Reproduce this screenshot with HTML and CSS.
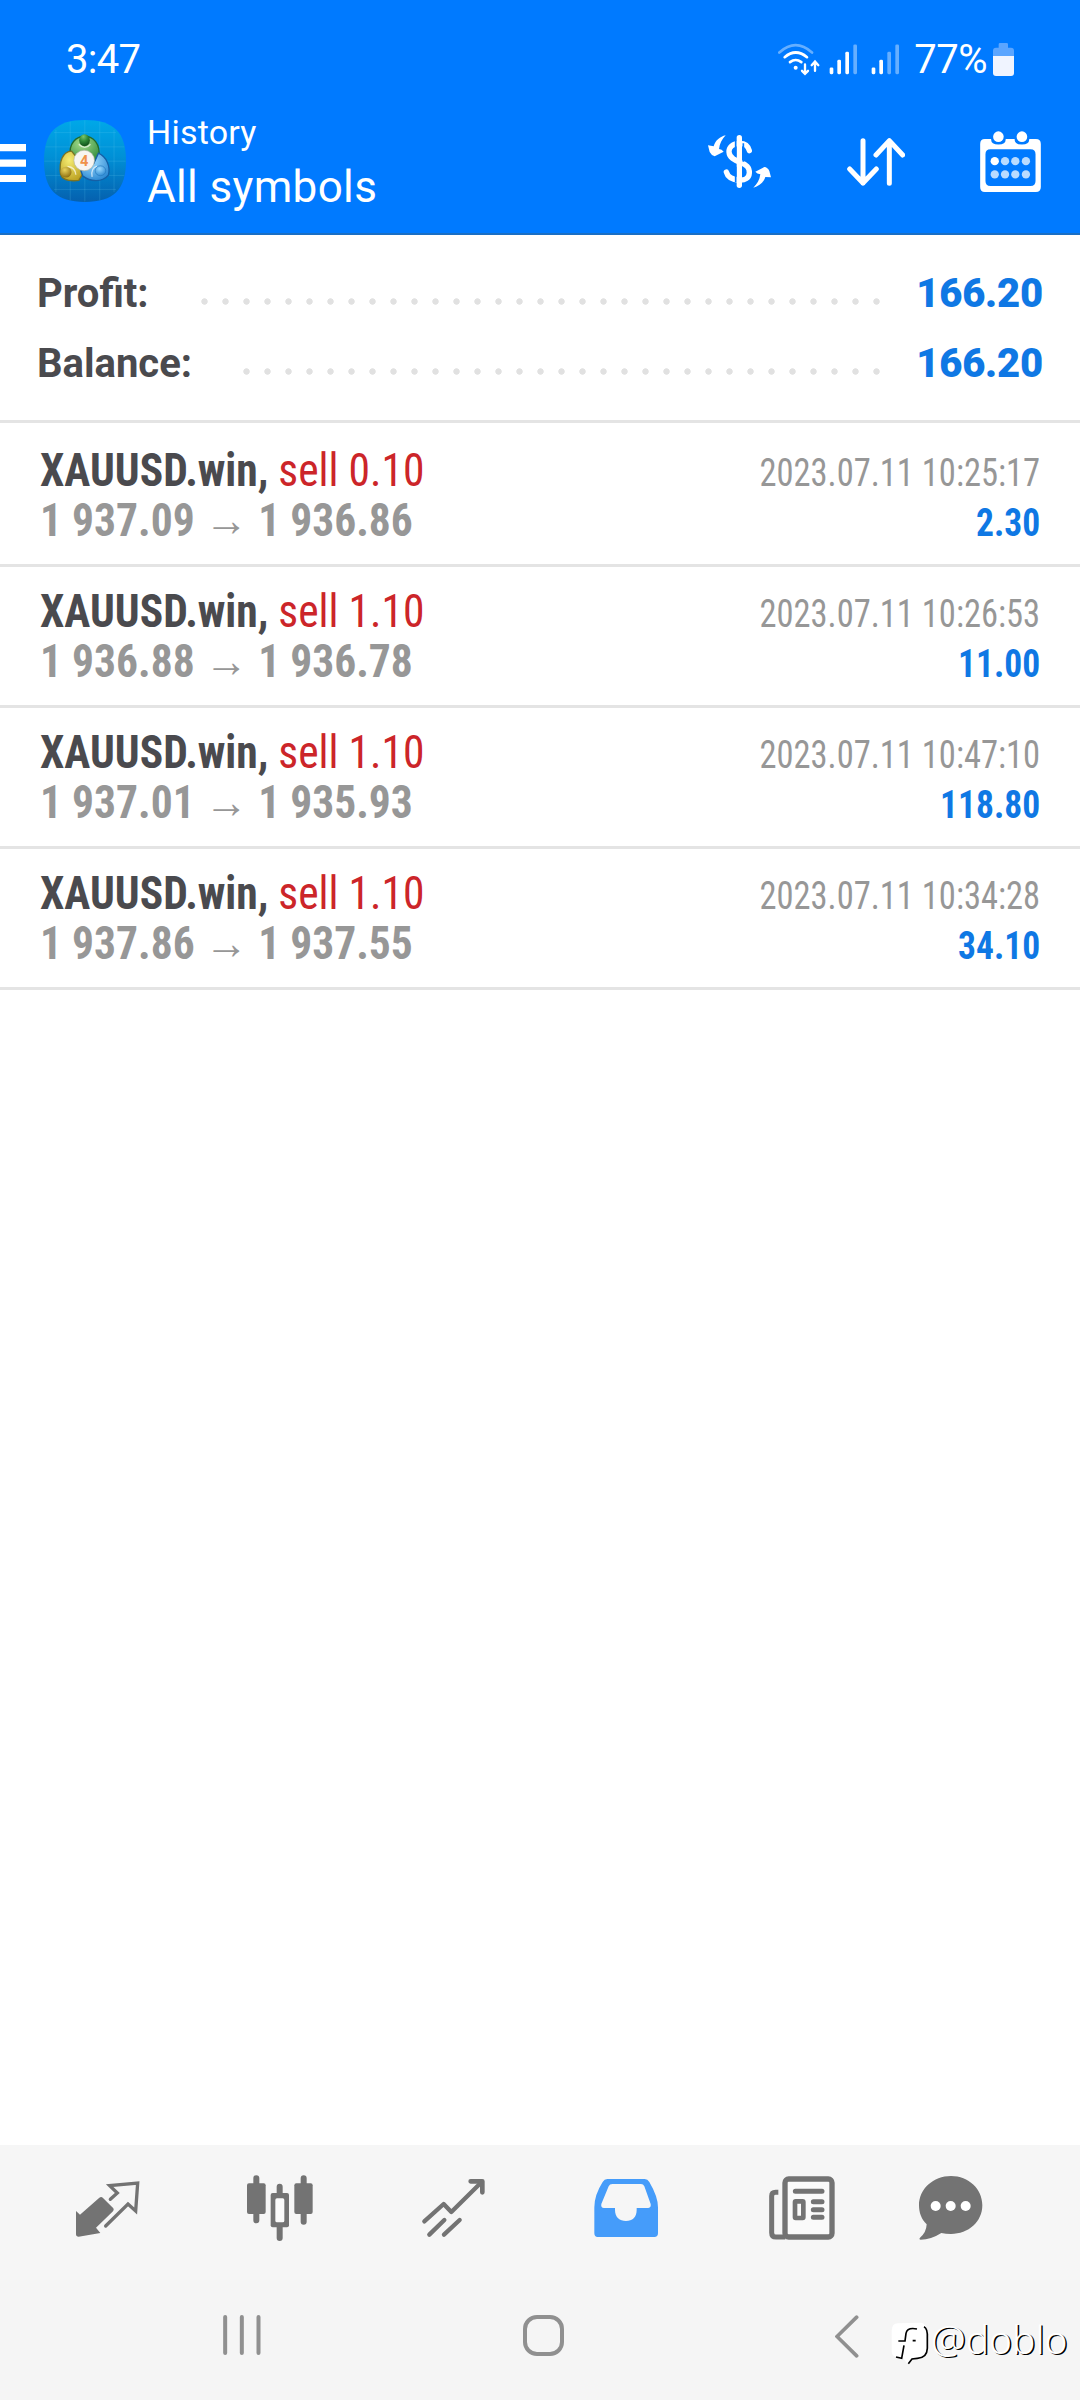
FILE: index.html
```
<!DOCTYPE html>
<html lang="en">
<head>
<meta charset="utf-8">
<title>History</title>
<link rel="stylesheet" href="styles.css">
</head>
<body>
<div class="screen">
  <header class="header">
    <div class="status">
      <span class="clock">3:47</span>
      <div class="status-right">
        <svg class="wifi" viewBox="297 70 126 98" width="42" height="33" fill="none" stroke="#fff" stroke-width="8" stroke-linecap="round">
          <path d="M301 98Q350 54 399 98" opacity=".4"/>
          <path d="M317 112Q350 84 384 112"/>
          <path d="M333 127Q350 114 367 127"/>
          <circle cx="350" cy="144" r="6" fill="#fff" stroke="none"/>
          <path d="M378 134V161M369 153L378 162L387 153M408 153V127M398 136L408 125L418 136" stroke-width="7"/>
        </svg>
        <svg class="signal" viewBox="449 73 84 92" width="28" height="31" fill="#fff">
          <rect x="451" y="143" width="11" height="20" rx="4"/><rect x="474" y="120" width="11" height="43" rx="4"/><rect x="498" y="96" width="11" height="67" rx="4"/><rect x="522" y="74" width="11" height="89" rx="4" opacity=".4"/>
        </svg>
        <svg class="signal second" viewBox="449 73 84 92" width="28" height="31" fill="#fff">
          <rect x="451" y="143" width="11" height="20" rx="4"/><rect x="474" y="120" width="11" height="43" rx="4"/><rect x="498" y="96" width="11" height="67" rx="4" opacity=".4"/><rect x="522" y="74" width="11" height="89" rx="4" opacity=".4"/>
        </svg>
        <span class="percent">77%</span>
        <svg viewBox="939 69 63 99" width="21" height="33">
          <path d="M939 108V92Q939 83 948 83H956V73Q956 69 960 69H980Q984 69 984 73V83H993Q1002 83 1002 92V108Z" fill="#5ba5ff"/>
          <path d="M939 108H1002V159Q1002 168 993 168H948Q939 168 939 159Z" fill="#f0f4ff"/>
        </svg>
      </div>
    </div>
    <div class="appbar">
      <svg class="menu" viewBox="0 0 26 38" width="26" height="38" fill="#fff"><path d="M0 0H26V7.3H0ZM0 15.5H26V22.8H0ZM0 31H26V38H0Z"/></svg>
      <svg class="logo" viewBox="40 45 247 247" width="82" height="82">
        <defs>
          <linearGradient id="sky" x1="0" y1="0" x2="0" y2="1"><stop offset="0" stop-color="#00a8e8"/><stop offset=".45" stop-color="#0090d6"/><stop offset="1" stop-color="#0560ae"/></linearGradient>
          <radialGradient id="green" cx=".4" cy=".3" r=".8"><stop offset="0" stop-color="#a5dc8a"/><stop offset="1" stop-color="#2c8a3c"/></radialGradient>
          <radialGradient id="knob" cx=".4" cy=".2" r=".8"><stop offset="0" stop-color="#7cc46a"/><stop offset=".5" stop-color="#2f8a38"/><stop offset="1" stop-color="#0f4f1a"/></radialGradient>
          <radialGradient id="gold" cx=".4" cy=".3" r=".8"><stop offset="0" stop-color="#f5ec72"/><stop offset="1" stop-color="#b89c1c"/></radialGradient>
          <radialGradient id="goldknob" cx=".4" cy=".3" r=".8"><stop offset="0" stop-color="#ead45d"/><stop offset="1" stop-color="#856408"/></radialGradient>
          <radialGradient id="azure" cx=".4" cy=".3" r=".8"><stop offset="0" stop-color="#9cdbff"/><stop offset="1" stop-color="#2382cf"/></radialGradient>
        </defs>
        <path d="M163 45C250 45 287 82 287 168C287 255 250 292 163 292C77 292 40 255 40 168C40 82 77 45 163 45Z" fill="url(#sky)"/>
        <path d="M76 75V262M119 50V287M163 46V291M208 50V287M251 75V262M70 83H257M45 126H282M41 169H286M45 212H282M70 254H257" stroke="#6fd0f5" stroke-opacity=".28" stroke-width="2"/>
        <path d="M120 155C112 116 138 94 162 94C188 94 211 116 205 157L190 168H134Z" fill="url(#green)" stroke="#226b2c" stroke-width="4"/>
        <path d="M123 139C97 140 84 170 90 209Q98 232 145 227L158 205L140 160Z" fill="url(#gold)" stroke="#7d7322" stroke-width="4"/>
        <path d="M204 145C228 156 241 184 234 211C214 235 178 230 157 214L151 198L190 176Z" fill="url(#azure)" stroke="#155fa5" stroke-width="4"/>
        <path d="M145 118Q163 137 180 118M111 185Q134 187 136 210M200 184Q180 190 185 216" fill="none" stroke="#fff" stroke-opacity=".65" stroke-width="4"/>
        <ellipse cx="162" cy="106" rx="16" ry="18" fill="url(#knob)"/>
        <ellipse cx="106" cy="202" rx="17" ry="16" fill="url(#goldknob)"/>
        <ellipse cx="210" cy="198" rx="16" ry="15" fill="url(#azure)" stroke="#2679bd" stroke-width="2"/>
        <circle cx="161" cy="167" r="31" fill="#f7f5f2" stroke="#b4b7a5" stroke-width="2"/>
        <text x="161" y="183" text-anchor="middle" class="logo-digit">4</text>
      </svg>
      <div class="titles"><div class="subtitle">History</div><div class="title">All symbols</div></div>
      <svg class="act-money" viewBox="84 345 189 159" width="63" height="53">
        <path d="M178 353V496" stroke="#fff" stroke-width="16" stroke-linecap="round" fill="none"/>
        <path d="M208 392C204 376 192 370 179 370C158 370 146 382 147 396C148 413 163 420 180 427C199 434 209 441 208 459C207 475 194 481 179 480C159 479 143 472 139 456" stroke="#fff" stroke-width="16" stroke-linecap="round" fill="none"/>
        <path d="M167 362V410M190 370V425M167 440V486" stroke="#007aff" stroke-width="5" fill="none"/>
        <path d="M137 346C120 350 107 360 101 379L84 376L89 396Q94 406 104 409L131 395Q126 388 117 387C119 370 126 358 137 346Z" fill="#fff"/>
        <path d="M220 503C237 498 250 489 256 471L273 472L268 453Q263 442 253 441L226 455Q231 462 241 463C239 480 231 492 220 503Z" fill="#fff"/>
      </svg>
      <svg class="act-sort" viewBox="499 352 174 144" width="58" height="48" fill="none" stroke="#fff" stroke-width="15" stroke-linecap="round" stroke-linejoin="round"><path d="M547 360V487M507 445L547 487L587 445M626 488V360M586 403L626 360L666 403"/></svg>
      <svg class="act-cal" viewBox="900 329 183 184" width="61" height="61">
        <path fill="#fff" fill-rule="evenodd" d="M914 353H1068Q1083 353 1083 368V498Q1083 513 1068 513H914Q900 513 900 498V368Q900 353 914 353ZM931 384Q916 384 916 399V480Q916 495 931 495H1052Q1067 495 1067 480V399Q1067 384 1052 384Z"/>
        <path d="M933 352V355Q933 370 955 370Q977 370 977 355V352ZM1004 352V355Q1004 370 1026 370Q1048 370 1048 355V352Z" fill="#007aff"/>
        <circle cx="955" cy="346" r="16" fill="#fff"/><circle cx="1026" cy="346" r="16" fill="#fff"/>
        <g fill="#b9dbff"><circle cx="944" cy="420" r="12.5" fill="#fff"/><circle cx="975" cy="420" r="12.5"/><circle cx="1006" cy="420" r="12.5"/><circle cx="1038" cy="420" r="12.5"/><circle cx="944" cy="460" r="12.5"/><circle cx="975" cy="460" r="12.5"/><circle cx="1006" cy="460" r="12.5"/><circle cx="1038" cy="460" r="12.5"/></g>
      </svg>
    </div>
  </header>

  <section class="summary">
    <div class="sum-row"><span>Profit:</span><i class="dots"></i><b class="sum-value">166.20</b></div>
    <div class="sum-row"><span>Balance:</span><i class="dots short"></i><b class="sum-value">166.20</b></div>
  </section>

  <main class="deals">
    <article class="deal"><div class="symbol"><b>XAUUSD.win,</b> <span class="sell">sell 0.10</span></div><time class="time">2023.07.11 10:25:17</time><div class="prices">1 937.09 <span class="arrow">→</span> 1 936.86</div><div class="profit">2.30</div></article>
    <article class="deal"><div class="symbol"><b>XAUUSD.win,</b> <span class="sell">sell 1.10</span></div><time class="time">2023.07.11 10:26:53</time><div class="prices">1 936.88 <span class="arrow">→</span> 1 936.78</div><div class="profit">11.00</div></article>
    <article class="deal"><div class="symbol"><b>XAUUSD.win,</b> <span class="sell">sell 1.10</span></div><time class="time">2023.07.11 10:47:10</time><div class="prices">1 937.01 <span class="arrow">→</span> 1 935.93</div><div class="profit">118.80</div></article>
    <article class="deal"><div class="symbol"><b>XAUUSD.win,</b> <span class="sell">sell 1.10</span></div><time class="time">2023.07.11 10:34:28</time><div class="prices">1 937.86 <span class="arrow">→</span> 1 937.55</div><div class="profit">34.10</div></article>
  </main>

  <nav class="tabs">
    <svg viewBox="105 106 195 198" width="65" height="66">
      <path d="M108 214L120 225L178 174Q184 170 189 175L220 206Q223 210 219 215L168 264L181 280L116 291Q108 291 108 284Z" fill="#737373"/>
      <path d="M211 179L232 160L209 138L293 130L287 214L264 193L197 259" fill="none" stroke="#737373" stroke-width="10" stroke-linejoin="miter" stroke-linecap="round"/>
    </svg>
    <svg viewBox="622 107 198 198" width="66" height="66">
      <path d="M650 117V243M720 142V296M792 117V247" stroke="#737373" stroke-width="18" stroke-linecap="round"/>
      <rect x="622" y="132" width="56" height="92" rx="6" fill="#737373"/><rect x="764" y="132" width="55" height="92" rx="6" fill="#737373"/><rect x="693" y="161" width="55" height="103" rx="6" fill="#737373"/><rect x="707" y="177" width="27" height="72" rx="5" fill="#fafafa"/>
    </svg>
    <svg viewBox="1142 105 195 198" width="65" height="66" fill="none" stroke="#737373" stroke-width="13" stroke-linecap="round" stroke-linejoin="round">
      <path d="M1152 244L1210 192L1233 216L1324 126"/><path d="M1291 124H1326V157" stroke-width="14"/><path d="M1167 284L1212 240M1211 284L1258 240"/>
    </svg>
    <svg viewBox="105 105 198 198" width="66" height="66">
      <path fill="#459cfa" fill-rule="evenodd" d="M145 117H257Q266 117 271 126Q297 170 297 202V280Q297 291 286 291H116Q106 291 106 280V202Q106 165 131 126Q136 117 145 117ZM160 132Q152 132 149 139L127 192Q125 204 135 204H168V210C168 232 182 243 201 243C220 243 233 232 233 210V204H268Q277 203 275 192L256 139Q253 132 246 132Z"/>
    </svg>
    <svg viewBox="626 105 198 198" width="66" height="66">
      <path d="M654 157H646Q634 157 634 168V278Q634 291 647 291H675" fill="none" stroke="#737373" stroke-width="15"/>
      <rect x="674" y="117" width="141" height="174" rx="11" fill="#fafafa" stroke="#737373" stroke-width="16"/>
      <path d="M705 154H785M759 185H785M759 209H785M759 232H785" stroke="#737373" stroke-width="15" stroke-linecap="round"/>
      <rect x="704" y="184" width="25" height="50" rx="2" fill="none" stroke="#737373" stroke-width="14"/>
    </svg>
    <svg viewBox="1075 105 198 198" width="66" height="66">
      <path d="M1174 108C1227 108 1268 147 1268 196C1268 245 1227 282 1174 282Q1158 282 1145 279Q1114 299 1083 299Q1077 298 1081 293Q1100 278 1101 253C1085 238 1078 218 1078 196C1078 147 1121 108 1174 108Z" fill="#737373"/>
      <circle cx="1128" cy="198" r="15" fill="#fff"/><circle cx="1173" cy="198" r="15" fill="#fff"/><circle cx="1218" cy="198" r="15" fill="#fff"/>
    </svg>
  </nav>

  <div class="sysnav">
    <svg class="recents" viewBox="130 138 113 120" width="38" height="40" stroke="#909090" stroke-width="12" stroke-linecap="round"><path d="M136 144V252M186 144V252M236 144V252"/></svg>
    <svg class="home" viewBox="0 0 41 41" width="41" height="41" fill="none" stroke="#909090" stroke-width="4"><rect x="2" y="2" width="37" height="37" rx="12"/></svg>
    <svg class="back" viewBox="106 134 72 128" width="24" height="43" fill="none" stroke="#909090" stroke-width="11" stroke-linecap="round"><path d="M171 140L112 198L171 256"/></svg>
  </div>

  <div class="watermark">
    <svg viewBox="270 153 117 135" width="39" height="45">
      <path d="M296 160Q276 158 275 182V245Q276 262 296 262L309 263L322 282L331 268H352Q380 266 381 238V184Q380 162 364 158Z" fill="#fff"/>
      <path d="M372 170Q384 176 382 206V235Q381 264 352 265L336 267L325 281" fill="none" stroke="#000" stroke-width="5"/>
      <path d="M351 177Q322 171 318 190L315 213H295M312 226L305 265L288 261M338 212H347" fill="none" stroke="#000" stroke-width="5"/>
    </svg>
    <span>@doblo</span>
  </div>
</div>
</body>
</html>
```
FILE: styles.css
```
* { box-sizing: border-box; }
body { margin: 0; background: #fff; font-family: Roboto, sans-serif; }
svg { display: block; flex: none; }
.screen { position: relative; width: 1080px; height: 2400px; display: flex; flex-direction: column; overflow: hidden; }

.header { height: 235px; background: #007aff; border-bottom: 2px solid #1a6fc4; color: #fff; }
.status { height: 90px; padding: 28px 66px 0 66px; display: flex; justify-content: space-between; align-items: center; font-size: 40px; line-height: 62px; }
.clock { padding-top: 2px; letter-spacing: -0.7px; }
.status-right { display: flex; align-items: center; }
.signal { margin-left: 9px; }
.second { margin-left: 14px; }
.percent { padding-top: 2px; margin: 0 6px 0 15px; letter-spacing: -0.5px; }
.appbar { height: 143px; display: flex; align-items: center; }
.menu { margin-top: 3px; }
.logo { margin: -1px 0 0 18px; }
.logo-digit { font: 700 44px Roboto, sans-serif; fill: #f0924a; }
.titles { margin-left: 21px; width: 561px; }
.subtitle { font-size: 34px; line-height: 50px; padding-bottom: 2px; letter-spacing: 0.2px; }
.title { font-size: 44px; line-height: 57px; letter-spacing: 0.35px; }
.act-sort { margin-left: 76px; }
.act-cal { margin-left: 75px; }

.summary { height: 188px; padding: 24px 37px 0; border-bottom: 3px solid #e4e4e4; }
.sum-row { display: flex; height: 70px; font-size: 40px; line-height: 70px; font-weight: 700; color: #4a4a4e; }
.dots { width: 693px; height: 7px; margin: 39px 0 0 auto; background: radial-gradient(circle, #e1e1e1 2.8px, transparent 3.6px) 0 0 / 21px 7px; }
.short { width: 651px; }
.sum-value { width: 156px; text-align: right; color: #0f78e4; letter-spacing: -0.2px; }

.deal { display: grid; grid-template-columns: 1fr auto; grid-template-rows: 50px 50px; align-items: baseline; height: 141px; padding: 19px 40px 0; border-bottom: 3px solid #e4e4e4; font-family: "Roboto Condensed", Roboto, sans-serif; line-height: 50px; font-size: 46px; white-space: nowrap; }
.deal:first-child { height: 144px; padding-top: 22px; }
.symbol { color: #4a4a4e; transform: scaleX(0.946); transform-origin: left; }
.sell { color: #cc2529; }
.time { font-size: 38px; color: #979797; transform: scaleX(0.908); transform-origin: right; }
.prices { font-weight: 700; color: #979797; transform: scaleX(0.946); transform-origin: left; }
.profit { font-size: 38px; font-weight: 700; color: #0f78e4; text-align: right; transform: scaleX(0.935); transform-origin: right; }

.tabs { margin-top: auto; height: 135px; padding: 30px 0 0 75px; background: #f6f6f6; display: grid; grid-template-columns: 172px 174px 173px 175px 149px 66px; align-items: start; }
.sysnav { height: 120px; padding: 35px 0 0 223px; background: #f5f5f5; display: flex; align-items: flex-start; }
.home { margin-left: 262px; }
.back { margin-left: 271px; }

.watermark { position: absolute; left: 890px; top: 2321px; display: flex; align-items: flex-start; color: #fff; font: 300 39px/45px "Noto Sans", sans-serif; text-shadow: 1.5px 1px 0.5px #000; }
.watermark span { margin: -5px 0 0 2px; }
```
